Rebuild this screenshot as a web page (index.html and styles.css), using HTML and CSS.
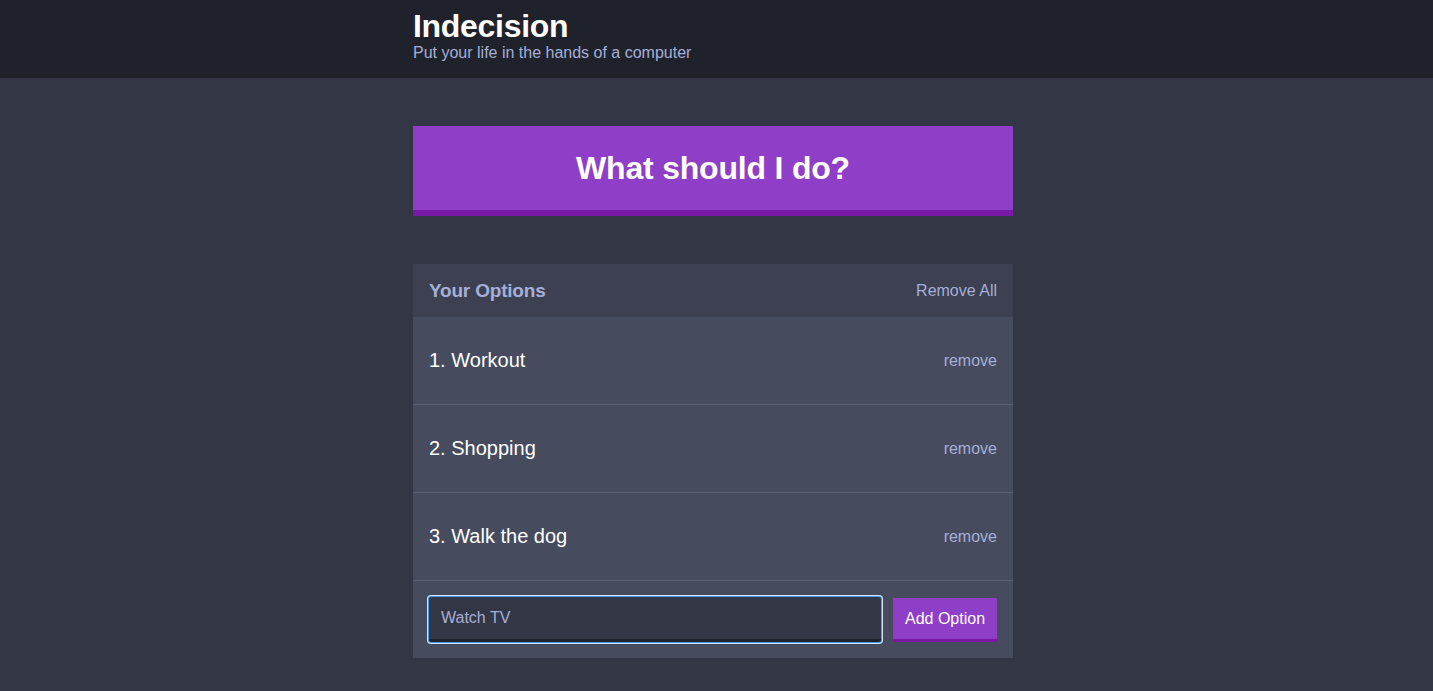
FILE: index.html
```html
<!DOCTYPE html>
<html>
<head>
<meta charset="utf-8">
<link rel="stylesheet" href="styles.css">
</head>
<body>
<header class="header">
  <div class="container">
    <h1 class="header__title">Indecision</h1>
    <h2 class="header__subtitle">Put your life in the hands of a computer</h2>
  </div>
</header>
<main class="container">
  <button class="big-button">What should I do?</button>
  <section class="widget">
    <div class="widget-header">
      <h3 class="widget-header__title">Your Options</h3>
      <button class="button--link">Remove All</button>
    </div>
    <div class="option">
      <p class="option__text">1. Workout</p>
      <button class="button--link button--small">remove</button>
    </div>
    <div class="option">
      <p class="option__text">2. Shopping</p>
      <button class="button--link button--small">remove</button>
    </div>
    <div class="option">
      <p class="option__text">3. Walk the dog</p>
      <button class="button--link button--small">remove</button>
    </div>
    <form class="add-option">
      <input class="add-option__input" type="text" value="Watch TV">
      <button class="button" type="button">Add Option</button>
    </form>
  </section>
</main>
</body>
</html>
```
FILE: styles.css
```css
* { box-sizing: border-box; }
html, body { margin: 0; padding: 0; }
body {
  background: #333645;
  font-family: "Liberation Sans", Arial, Helvetica, sans-serif;
  color: #ffffff;
  height: 691px;
  overflow: hidden;
}
.container {
  width: 600px;
  margin-left: calc(50% - 303.5px);
}
.header {
  background: #20222b;
  height: 78px;
  padding-top: 9px;
}
.header__title {
  margin: 0;
  font-size: 32px;
  line-height: 34px;
  font-weight: bold;
  letter-spacing: -0.3px;
}
.header__subtitle {
  margin: 1px 0 0;
  color: #a5afd7;
  font-size: 16px;
  line-height: 18px;
  font-weight: normal;
}
.big-button {
  display: block;
  width: 100%;
  margin: 48px 0 48px;
  height: 90px;
  background: #8f3ec7;
  border: none;
  border-bottom: 6px solid #7a18a8;
  color: #fff;
  font-family: inherit;
  font-weight: bold;
  font-size: 32px;
  padding: 0;
  letter-spacing: -0.2px;
}
.widget {
  background: #464b5e;
}
.widget-header {
  background: #3c4051;
  height: 53px;
  display: flex;
  align-items: center;
  justify-content: space-between;
  padding: 0 16px;
}
.widget-header__title {
  margin: 0;
  color: #a5afd7;
  font-size: 19px;
  font-weight: bold;
  letter-spacing: -0.2px;
}
.button--link {
  background: none;
  border: none;
  padding: 0;
  color: #a5afd7;
  font-family: inherit;
  font-size: 16px;
}
.button--small { font-size: 16px; }
.option {
  height: 88px;
  display: flex;
  align-items: center;
  justify-content: space-between;
  padding: 0 16px;
  border-bottom: 1px solid #5b6077;
}
.option__text {
  margin: 0;
  font-size: 20px;
  color: #fff;
}
.add-option {
  display: flex;
  align-items: center;
  padding: 16px 16px 16px;
  gap: 12px;
  height: 77px;
}
.add-option__input {
  flex: 1;
  height: 45px;
  background: #333645;
  border: none;
  border-bottom: 3px solid #20222b;
  border-radius: 2px;
  color: #a5afd7;
  font-family: inherit;
  font-size: 16px;
  padding: 0 12px;
  outline: none;
  box-shadow: 0 0 0 1px #4a9ae8, 0 0 0 2px #cfe4fb;
}
.button {
  background: #8f3ec7;
  border: none;
  border-bottom: 3px solid #7a18a8;
  color: #fff;
  font-family: inherit;
  font-size: 16px;
  height: 44px;
  width: 104px;
  padding: 1px 0 0;
}
```
